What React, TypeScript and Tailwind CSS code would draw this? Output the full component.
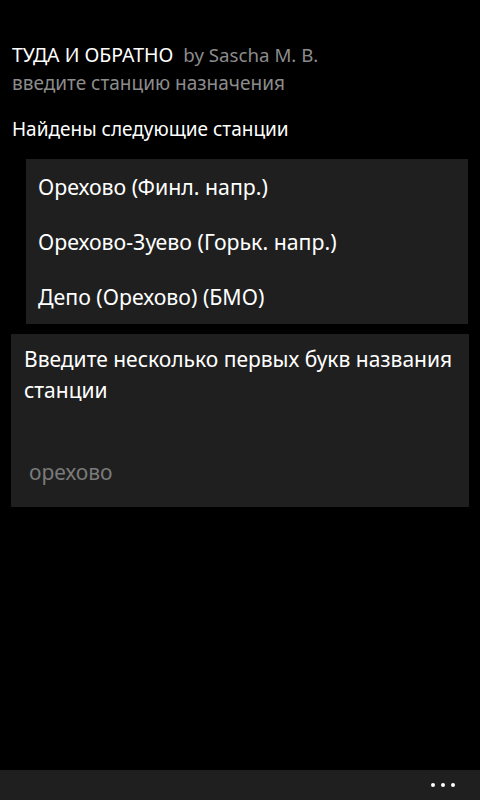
import React from "react";

const stations = [
  "Орехово (Финл. напр.)",
  "Орехово-Зуево (Горьк. напр.)",
  "Депо (Орехово) (БМО)",
];

export default function App() {
  return (
    <div
      className="relative w-[480px] h-[800px] bg-black text-white overflow-hidden flex flex-col"
      style={{ fontFamily: '"Noto Sans", "Open Sans", sans-serif' }}
    >
      <div className="pt-[43px] px-[12px]">
        <div className="flex items-baseline gap-[10px] leading-[24px]">
          <span className="text-white text-[19.5px]">ТУДА И ОБРАТНО</span>
          <span className="text-[#8c8c8c] text-[18.7px]">by Sascha M. B.</span>
        </div>
        <div className="text-[19px] leading-[24px] text-[#8c8c8c] mt-[4px]">
          введите станцию назначения
        </div>
        <div className="text-[19px] leading-[24px] text-white mt-[22px]">
          Найдены следующие станции
        </div>
      </div>

      <div className="mt-[18px] ml-[26px] mr-[12px] bg-[#1f1f1f] flex flex-col">
        {stations.map((s) => (
          <div key={s} className="h-[55px] flex items-center px-[12px] text-[21.3px]">
            {s}
          </div>
        ))}
      </div>

      <div className="mt-[10px] mx-[11px] h-[173px] bg-[#1f1f1f] flex flex-col px-[13px] pt-[10px]">
        <div className="text-[21px] leading-[31px]">
          Введите несколько первых букв названия станции
        </div>
        <div className="mt-[51px] pl-[5px] text-[21px] leading-[31px] text-[#7a7a7a]">
          орехово
        </div>
      </div>

      <div className="mt-auto h-[30px] bg-[#1f1f1f] flex items-center justify-end pr-[25px] gap-[6px]">
        <span className="w-[4px] h-[4px] rounded-full bg-white" />
        <span className="w-[4px] h-[4px] rounded-full bg-white" />
        <span className="w-[4px] h-[4px] rounded-full bg-white" />
      </div>
    </div>
  );
}
